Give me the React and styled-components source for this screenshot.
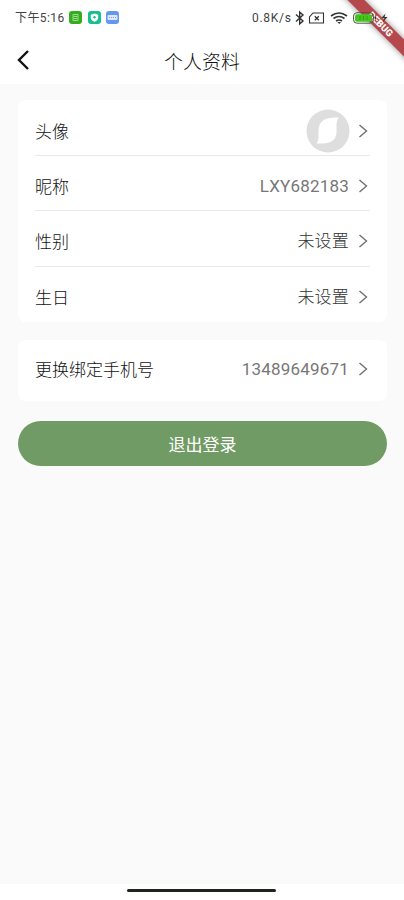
// Dependencies
import styled, { createGlobalStyle } from 'styled-components'

const GlobalStyle = createGlobalStyle`
  * {
    box-sizing: border-box;
  }

  body {
    margin: 0;
    background: #fafafa;
    font-family: Roboto, 'Noto Sans CJK SC', sans-serif;
  }
`

const Screen = styled.div`
  position: relative;
  width: 404px;
  height: 900px;
  overflow: hidden;
  display: flex;
  flex-direction: column;
  background: #fafafa;
`

const Top = styled.header`
  height: 84px;
  background: #fff;
`

const StatusBar = styled.div`
  position: relative;
  z-index: 2;
  height: 36px;
  padding: 0 15px;
  display: flex;
  align-items: center;
  justify-content: space-between;
  font-size: 12px;
  color: #444;
`

const StatusGroup = styled.div`
  display: flex;
  align-items: center;
  height: 36px;
  padding-bottom: 1px;

  svg {
    display: block;
    flex: none;
  }
`

const Clock = styled.span`
  width: 50px;
  margin-right: 4px;
  margin-top: -2px;
  white-space: nowrap;
  letter-spacing: 0.4px;
`

const Speed = styled.span`
  width: 41px;
  white-space: nowrap;
  letter-spacing: 0.7px;
`

const AppIcon = styled.svg`
  margin-right: 5.5px;
`

const TitleBar = styled.div`
  height: 48px;
  display: grid;
  grid-template-columns: 60px 1fr 60px;
  align-items: center;
`

const BackButton = styled.button`
  padding: 0 0 0 16px;
  border: 0;
  background: none;

  svg {
    display: block;
  }
`

const Title = styled.h1`
  margin: 6px 0 0;
  font-size: 19px;
  line-height: 28px;
  font-weight: 300;
  color: #111;
  text-align: center;
`

const Content = styled.main`
  flex: 1;
  padding: 16px 17px 0 18px;
  display: flex;
  flex-direction: column;
`

const Card = styled.section`
  height: ${({ $height }) => $height}px;
  margin-bottom: 18px;
  padding: 1px 17px 0;
  border-radius: 8px;
  background: #fff;
`

const Row = styled.div`
  height: ${({ $height }) => $height || 55.2}px;
  display: flex;
  align-items: center;
  border-bottom: ${({ $last }) => ($last ? '0' : '1px solid #e8e8e8')};
  padding-top: ${({ $height }) => ($height ? 0 : 5)}px;
`

const Label = styled.span`
  flex: 1;
  padding-top: 2px;
  font-size: 17px;
  font-weight: 300;
  line-height: 24px;
  color: #111;
`

const Value = styled.span`
  margin-right: 9px;
  padding-top: ${({ $digits }) => ($digits ? 0 : 1)}px;
  font-size: 17px;
  font-weight: ${({ $digits }) => ($digits ? 400 : 300)};
  line-height: 24px;
  letter-spacing: 0.2px;
  color: ${({ $digits }) => ($digits ? '#777' : '#333')};
`

const Avatar = styled.svg`
  margin-right: 8px;
`

const LogoutButton = styled.button`
  height: 45px;
  margin-top: 2px;
  padding: 2px 0 0;
  border: 0;
  border-radius: 23px;
  background: #719b64;
  color: #fff;
  font-family: inherit;
  font-size: 17px;
  line-height: 24px;
`

const NavigationBar = styled.footer`
  height: 16px;
  padding-top: 5px;
  background: #fff;
`

const Handle = styled.div`
  width: 149px;
  height: 3px;
  margin: 0 auto 0 127px;
  border-radius: 2px;
  background: #20241f;
`

// Debug ribbon over the corner of the screen
const Ribbon = styled.div`
  position: absolute;
  z-index: 1;
  top: 18px;
  left: 330px;
  width: 100px;
  height: 12px;
  padding-left: 1px;
  transform: rotate(45deg);
  background: #b4484c;
  box-shadow: 0 0 6px rgba(0, 0, 0, 0.45);
  color: #fff;
  font-size: 9.5px;
  font-weight: 900;
  line-height: 12px;
  text-align: center;
`

const Arrow = () => (
  <svg width="12" height="16" viewBox="0 0 12 16" fill="none">
    <path d="M1.5 2l7 6-7 6" stroke="#707070" strokeWidth="1.4" />
  </svg>
)

const AppIcons = () => (
  <>
    <AppIcon width="13" height="13" viewBox="0 0 13 13">
      <rect width="13" height="13" rx="3" fill="#36ad20" />
      <path d="M4 3.5h5v6H4zM4.5 5.5h4M4.5 7.5h4" stroke="#9bdd8b" fill="none" />
    </AppIcon>
    <AppIcon width="13" height="13" viewBox="0 0 13 13">
      <rect width="13" height="13" rx="3" fill="#16c08a" />
      <path d="M6.5 2.5l3.7 1.3v3q0 2.5-3.7 4-3.7-1.5-3.7-4v-3z" fill="#fff" />
      <circle cx="6.5" cy="6.2" r="1.2" fill="#16c08a" />
    </AppIcon>
    <AppIcon width="13" height="13" viewBox="0 0 13 13">
      <rect width="13" height="13" rx="3" fill="#6497ef" />
      <rect x="1.5" y="4" width="10" height="5" rx="1" fill="#dbe8ff" />
      <path d="M3 6.5h7" stroke="#82abf0" strokeDasharray="1 1" />
    </AppIcon>
  </>
)

const SystemIcons = () => (
  <svg width="96" height="16" viewBox="0 0 96 16" fill="none" stroke="#333">
    <path d="M3 4.5l7 6.5-3.3 3V2L10 5l-7 6.5" strokeWidth="1.4" />
    <path d="M20 3h10.5v10h-14V7z" strokeWidth="1.1" />
    <path d="M21.8 6.3l4 4m0-4l-4 4" strokeWidth="1.3" />
    <path d="M38 6q8-6 16 0M40.5 8.5q5.5-4 11 0M43 11q3-2 6 0" strokeWidth="1.6" />
    <path d="M44.4 12h3.6l-1.8 2z" fill="#333" stroke="none" />
    <rect x="60.5" y="2.7" width="20" height="10.5" rx="3.5" stroke="#4a5746" />
    <rect x="62" y="4.2" width="17" height="7.5" rx="2" fill="#46c51d" stroke="none" />
    <path d="M67 6v4M70.5 6v4M74 6v4" stroke="#35a315" />
    <path d="M82.5 6.5v3" strokeWidth="1.5" />
    <path d="M92.5 3.5l-4 4.500h3l-2 4.500 5-5.500h-3z" fill="#333" stroke="none" />
  </svg>
)

const rows = [
  { label: '头像', avatar: true },
  { label: '昵称', value: 'LXY682183', digits: true },
  { label: '性别', value: '未设置' },
  { label: '生日', value: '未设置', last: true },
]

// Component
const App = () => (
  <Screen>
    <GlobalStyle />
    <Top>
      <StatusBar>
        <StatusGroup>
          <Clock>下午5:16</Clock>
          <AppIcons />
        </StatusGroup>
        <StatusGroup>
          <Speed>0.8K/s</Speed>
          <SystemIcons />
        </StatusGroup>
      </StatusBar>
      <TitleBar>
        <BackButton aria-label="返回">
          <svg width="14" height="22" viewBox="0 0 14 22" fill="none">
            <path d="M12 2L3 11l9 9" stroke="#111" strokeWidth="2.4" />
          </svg>
        </BackButton>
        <Title>个人资料</Title>
      </TitleBar>
    </Top>
    <Ribbon>DEBUG</Ribbon>
    <Content>
      <Card $height={222}>
        {rows.map(({ label, value, avatar, digits, last }) => (
          <Row key={label} $last={last}>
            <Label>{label}</Label>
            {avatar ? (
              <Avatar width="44" height="44" viewBox="0 0 44 44">
                <circle cx="22" cy="22" r="21.5" fill="#dedede" />
                <path
                  d="M33 8.500C26 8 20 9 17 11.500C12 15 12.500 21 12.500 28Q12.500 32 10.500 34.500C18 35 24 34 27.500 31C31.500 27 30.500 22 30.500 16Q30.500 11 33 8.500Z"
                  fill="#fff"
                />
              </Avatar>
            ) : (
              <Value $digits={digits}>{value}</Value>
            )}
            <Arrow />
          </Row>
        ))}
      </Card>
      <Card $height={61}>
        <Row $height={56} $last>
          <Label>更换绑定手机号</Label>
          <Value $digits>13489649671</Value>
          <Arrow />
        </Row>
      </Card>
      <LogoutButton>退出登录</LogoutButton>
    </Content>
    <NavigationBar>
      <Handle />
    </NavigationBar>
  </Screen>
)

// Export
export default App
